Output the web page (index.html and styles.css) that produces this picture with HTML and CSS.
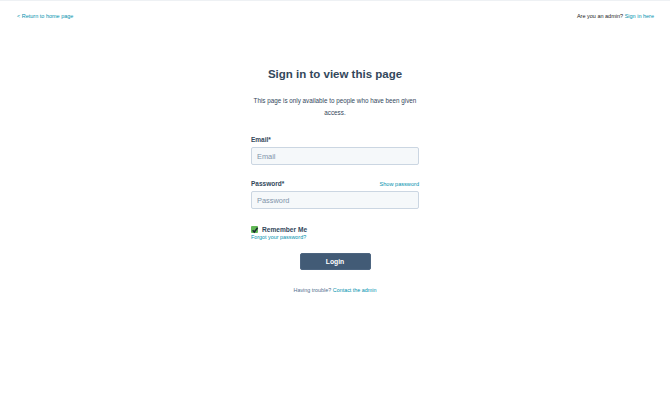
FILE: index.html
```html
<!DOCTYPE html>
<html lang="en">
<head>
<meta charset="utf-8">
<title>Sign in to view this page</title>
<link rel="stylesheet" href="styles.css">
</head>
<body>
<header class="topbar">
  <a class="link" href="#">&lt; Return to home page</a>
  <span class="admin">Are you an admin? <a class="link" href="#">Sign in here</a></span>
</header>
<main class="panel">
  <h1 class="title">Sign in to view this page</h1>
  <p class="desc">This page is only available to people who have been given access.</p>
  <form class="form">
    <label class="label first" for="email">Email*</label>
    <input class="field" id="email" type="text" placeholder="Email">
    <div class="label-row">
      <label class="label" for="pw">Password*</label>
      <a class="link show" href="#">Show password</a>
    </div>
    <input class="field" id="pw" type="password" placeholder="Password">
    <div class="remember">
      <span class="check"><svg viewBox="0 0 8 8" width="8" height="8"><path d="M1.6 4.3 L3.3 6 L6.6 1.8" fill="none" stroke="#1b2733" stroke-width="1.5"/></svg></span>
      <span class="remember-text">Remember Me</span>
    </div>
    <a class="link forgot" href="#">Forgot your password?</a>
    <div class="btn-wrap"><button class="btn" type="button">Login</button></div>
  </form>
  <p class="trouble">Having trouble? <a class="link" href="#">Contact the admin</a></p>
</main>
</body>
</html>
```

FILE: styles.css
```css
* { box-sizing: border-box; }
html, body { margin: 0; padding: 0; background: #fff; }
body {
  font-family: "Liberation Sans", Arial, Helvetica, sans-serif;
  color: #33475b;
  border-top: 1px solid #eef1f4;
  width: 670px;
  height: 414px;
}
.link { color: #0091ae; text-decoration: none; }
.topbar {
  display: flex;
  justify-content: space-between;
  padding: 11px 16px 0 17px;
  font-size: 5.5px;
  line-height: 8px;
}
.admin { color: #222; }
.panel {
  width: 168px;
  margin: 47px auto 0;
  text-align: center;
}
.title {
  margin: 0;
  font-size: 11.5px;
  line-height: 14px;
  font-weight: bold;
  color: #33475b;
}
.desc {
  margin: 14px 0 0;
  font-size: 6.3px;
  line-height: 11.5px;
  color: #33475b;
}
.form {
  display: flex;
  flex-direction: column;
  text-align: left;
}
.label {
  font-size: 6.5px;
  line-height: 8px;
  font-weight: bold;
  color: #33475b;
}
.label.first { margin-top: 18px; }
.label-row {
  margin-top: 15px;
  display: flex;
  justify-content: space-between;
  align-items: center;
}
.show { font-size: 5.6px; line-height: 8px; }
.field {
  margin-top: 3px;
  width: 168px;
  height: 18px;
  border: 1px solid #cbd6e2;
  border-radius: 2px;
  background: #f5f8fa;
  padding: 0 5px;
  font-family: "Liberation Sans", Arial, sans-serif;
  font-size: 7.4px;
  color: #33475b;
  outline: none;
}
.field::placeholder { color: #8194aa; }
.remember {
  margin-top: 16.5px;
  display: flex;
  align-items: center;
  gap: 4px;
  height: 8px;
}
.check {
  width: 7px;
  height: 7px;
  background: #62b856;
  border-radius: 1px;
  display: flex;
  align-items: center;
  justify-content: center;
  overflow: visible;
}
.check svg { flex: none; }
.remember-text {
  font-size: 6.6px;
  font-weight: bold;
  line-height: 8px;
}
.forgot {
  font-size: 5.4px;
  line-height: 7px;
}
.btn-wrap {
  margin-top: 12.5px;
  display: flex;
  justify-content: center;
}
.btn {
  width: 71px;
  height: 17px;
  background: #425b76;
  color: #fff;
  border: 1px solid #4d6580;
  border-radius: 2px;
  font-family: "Liberation Sans", Arial, sans-serif;
  font-size: 6.8px;
  font-weight: bold;
  padding: 0;
}
.trouble {
  margin: 16.5px 0 0;
  font-size: 5.4px;
  line-height: 7px;
  color: #516f90;
}
```
